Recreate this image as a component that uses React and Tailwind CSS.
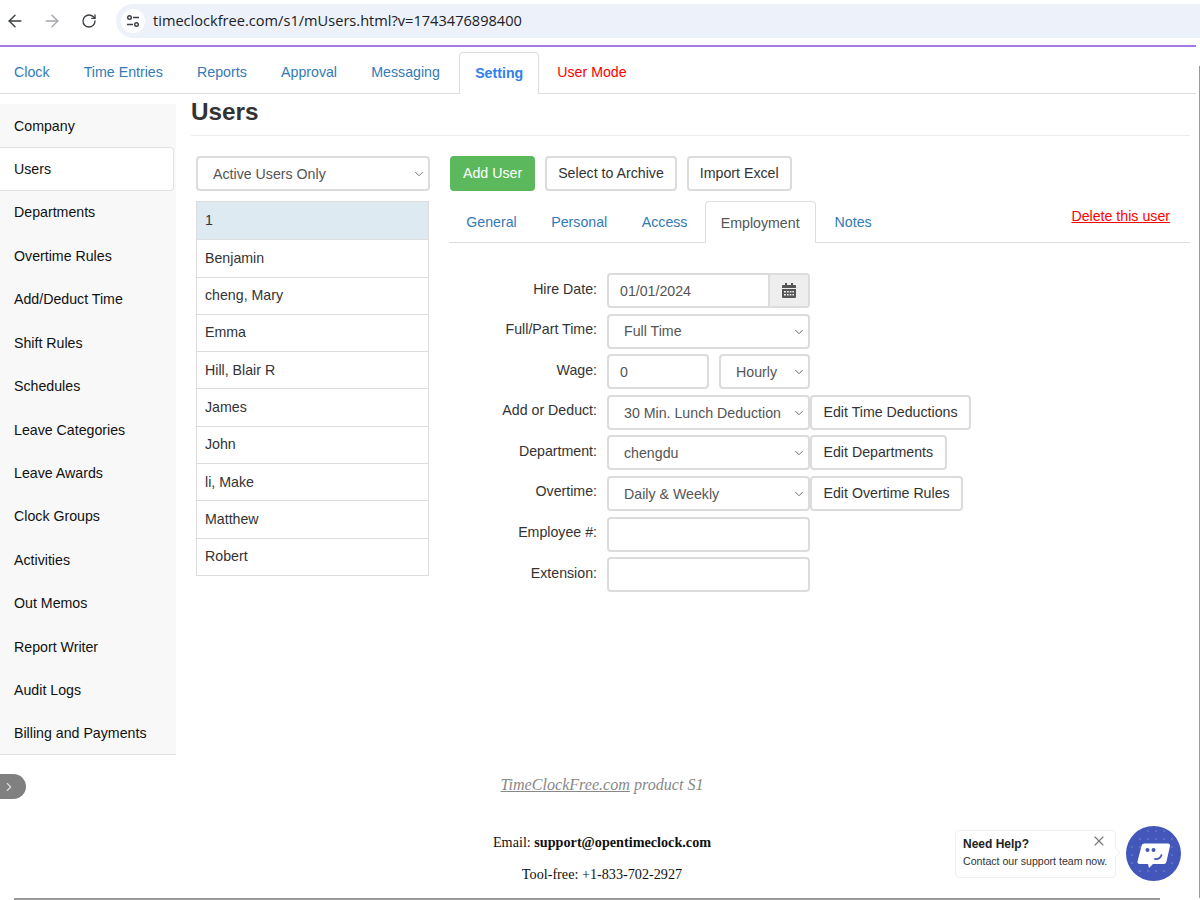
import React from "react";
import { ArrowLeft, ArrowRight, RotateCw, ChevronDown, ChevronRight, X } from "lucide-react";

const nav = ["Clock", "Time Entries", "Reports", "Approval", "Messaging"];
const side = ["Company", "Users", "Departments", "Overtime Rules", "Add/Deduct Time", "Shift Rules", "Schedules", "Leave Categories", "Leave Awards", "Clock Groups", "Activities", "Out Memos", "Report Writer", "Audit Logs", "Billing and Payments"];
const users = ["1", "Benjamin", "cheng, Mary", "Emma", "Hill, Blair R", "James", "John", "li, Make", "Matthew", "Robert"];

function Select({ value, className = "" }) {
  return (
    <div className={`relative h-[35px] rounded border-2 border-[#dcdcdc] bg-white flex items-center pl-[15px] pt-[2px] text-[14.2px] text-[#555] ${className}`}>
      <span className="whitespace-nowrap">{value}</span>
      <ChevronDown size={14} strokeWidth={1.4} className="absolute right-[2px] top-[9px] text-[#555]" />
    </div>
  );
}

function Btn({ children, className = "px-[11.5px]" }) {
  return <div className={`h-[35px] rounded border-2 border-[#dcdcdc] bg-white flex items-center text-[14.2px] text-[#333] whitespace-nowrap ${className}`}>{children}</div>;
}

function Row({ label, children }) {
  return (
    <div className="flex items-start h-[40.6px]">
      <div className="w-[148px] text-right text-[14.2px] text-[#333] pt-[5.5px] whitespace-nowrap">{label}</div>
      <div className="ml-[10px] flex items-start">{children}</div>
    </div>
  );
}

function Input({ value = "", className = "w-[203px]" }) {
  return <div className={`h-[35px] rounded border-2 border-[#dcdcdc] bg-white flex items-center pl-[11px] pt-[2px] text-[14.2px] text-[#555] ${className}`}>{value}</div>;
}

function CalendarIcon() {
  return (
    <svg width="14" height="15" viewBox="0 0 14 15" fill="#555">
      <rect x="3" y="0" width="2" height="3" />
      <rect x="9" y="0" width="2" height="3" />
      <path d="M1 2h12a1 1 0 0 1 1 1v2H0V3a1 1 0 0 1 1-1z" />
      <path fillRule="evenodd" d="M0 6h14v8a1 1 0 0 1-1 1H1a1 1 0 0 1-1-1zM2 8v1.5h2V8zm3 0v1.5h1.7V8zm2.7 0v1.5h1.7V8zm2.7 0v1.5H12V8zM2 11v1.5h2V11zm3 0v1.5h1.7V11zm2.7 0v1.5h1.7V11zm2.7 0v1.5H12V11z" />
    </svg>
  );
}

function ChatButton() {
  const dots = [];
  for (let y = 5; y < 55; y += 8) {
    for (let x = 6; x < 55; x += 8) {
      if ((x - 27.5) ** 2 + (y - 27.5) ** 2 < 625) dots.push(<circle key={`${x}-${y}`} cx={x} cy={y} r="0.8" fill="#7f8fd6" />);
    }
  }
  return (
    <svg width="55" height="55" viewBox="0 0 55 55">
      <circle cx="27.5" cy="27.5" r="27.5" fill="#4357bb" />
      {dots}
      <path d="M18 17.500h24a2 2 0 0 1 2 2.500l-3.500 15.500a3 3 0 0 1-3 2.500H27l-4 4-1-4h-8.500a2 2 0 0 1-2-2.500L15.500 20a3 3 0 0 1 2.500-2.500z" fill="#fff" />
      <circle cx="21.500" cy="24" r="2" fill="#4357bb" />
      <circle cx="27.500" cy="24" r="2" fill="#4357bb" />
      <path d="M29 33c3 .3 5.500-1 6.500-4" fill="none" stroke="#4357bb" strokeWidth="1.800" strokeLinecap="round" />
    </svg>
  );
}

export default function App() {
  return (
    <div className="relative h-[900px] w-[1200px] overflow-hidden bg-white [font-family:Liberation_Sans,sans-serif]">
      {/* Browser toolbar */}
      <div className="h-[45px] flex items-center pl-[5px] pb-[3px] [font-family:Open_Sans,sans-serif]">
        <ArrowLeft size={20} strokeWidth={1.7} className="text-[#3c4043]" />
        <ArrowRight size={20} strokeWidth={1.7} className="ml-[17px] text-[#a5a8ac]" />
        <RotateCw size={16} strokeWidth={2} className="ml-[19px] text-[#3c4043]" />
        <div className="ml-[19px] flex h-[34px] flex-1 items-center rounded-l-full bg-[#edf2fa] pl-[5px]">
          <div className="flex h-[24px] w-[24px] items-center justify-center rounded-full bg-white">
            <svg width="14" height="14" viewBox="0 0 14 14" fill="none" stroke="#3c4043" strokeWidth="1.4">
              <circle cx="3.500" cy="3.500" r="1.800" />
              <path d="M7 3.500h6M1 10.500h6" />
              <circle cx="10.500" cy="10.500" r="1.800" />
            </svg>
          </div>
          <span className="ml-[8px] text-[14.6px] text-[#202124]">timeclockfree.com/s1/mUsers.html?v=1743476898400</span>
        </div>
      </div>
      <div className="h-[2px] w-[1196px] bg-[#a47ae2]" />

      {/* Top nav */}
      <div className="flex h-[47px] w-[1196px] items-end border-b border-[#dedede]">
        {nav.map((n) => (
          <div key={n} className="flex h-[41px] items-center pl-[14px] pr-[20.25px] pt-px text-[14.2px] text-[#337ab7] whitespace-nowrap">{n}</div>
        ))}
        <div className="-mb-px -ml-[1px] flex h-[42px] items-center rounded-t border border-b-0 border-[#dedede] bg-white px-[15px] pt-px text-[14.2px] font-bold text-[#2f80ed]">Setting</div>
        <div className="flex h-[41px] items-center pl-[18px] pt-px text-[14.2px] text-[#f00] whitespace-nowrap">User Mode</div>
      </div>

      <div className="flex">
        {/* Sidebar */}
        <div className="mt-[10px] h-[651px] w-[176px] shrink-0 self-start overflow-hidden border-b border-[#e2e2e2] bg-[#f8f8f8]">
          {side.map((s) =>
            s === "Users" ? (
              <div key={s} className="flex h-[43.43px] w-[174px] items-center rounded-r border border-l-0 border-[#e2e2e2] bg-white pl-[14px] pt-px text-[14.2px] text-[#111]">{s}</div>
            ) : (
              <div key={s} className="flex h-[43.43px] items-center pl-[14px] pt-px text-[14.2px] text-[#111]">{s}</div>
            )
          )}
        </div>

        {/* Main */}
        <div className="ml-[15px] w-[999px]">
          <div className="flex h-[42px] items-center border-b border-[#eeeeee] pb-[4px] text-[24.3px] font-bold text-[#333]">Users</div>
          <div className="mt-[20px] flex pl-[5px]">
            <div className="w-[234px] shrink-0">
              <Select value="Active Users Only" className="w-[234px]" />
              <div className="mt-[10px] w-[233px] border border-[#ddd]">
                {users.map((u, i) => (
                  <div key={u} className={`flex h-[37.3px] items-center pl-[8px] text-[14.2px] text-[#333] ${i ? "border-t border-[#ddd]" : "bg-[#deeaf2]"}`}>{u}</div>
                ))}
              </div>
            </div>

            <div className="ml-[19px] flex-1">
              <div className="flex gap-[10px] pl-px">
                <div className="flex h-[35px] items-center rounded bg-[#5cb85c] px-[13px] text-[14.2px] text-white">Add User</div>
                <Btn className="px-[11px]">Select to Archive</Btn>
                <Btn className="px-[11px]">Import Excel</Btn>
              </div>
              <div className="mt-[10px] flex h-[42px] items-end justify-between border-b border-[#dedede] pr-[20px]">
                <div className="flex items-end">
                  {["General", "Personal", "Access"].map((t) => (
                    <div key={t} className="flex h-[41px] items-center px-[17.25px] pt-[2px] text-[14.2px] text-[#337ab7]">{t}</div>
                  ))}
                  <div className="-mb-px flex h-[42px] items-center rounded-t border border-b-0 border-[#dedede] bg-white px-[15px] pt-[2px] text-[14.2px] text-[#555]">Employment</div>
                  <div className="flex h-[41px] items-center pl-[19px] pt-[2px] text-[14.2px] text-[#337ab7]">Notes</div>
                </div>
                <div className="mb-[15px] text-[14.2px] text-[#f00] underline">Delete this user</div>
              </div>

              <div className="mt-[30px]">
                <Row label="Hire Date:">
                  <div className="flex h-[35px] w-[203px] overflow-hidden rounded border-2 border-[#dcdcdc]">
                    <div className="flex flex-1 items-center pl-[11px] pt-[2px] text-[14.2px] text-[#555]">01/01/2024</div>
                    <div className="flex w-[40px] items-center justify-center border-l-2 border-[#dcdcdc] bg-[#eeeeee]"><CalendarIcon /></div>
                  </div>
                </Row>
                <Row label="Full/Part Time:"><Select value="Full Time" className="w-[203px]" /></Row>
                <Row label="Wage:">
                  <Input value="0" className="w-[102px]" />
                  <Select value="Hourly" className="ml-[10px] w-[91px]" />
                </Row>
                <Row label="Add or Deduct:">
                  <Select value="30 Min. Lunch Deduction" className="w-[203px]" />
                  <Btn>Edit Time Deductions</Btn>
                </Row>
                <Row label="Department:">
                  <Select value="chengdu" className="w-[203px]" />
                  <Btn>Edit Departments</Btn>
                </Row>
                <Row label="Overtime:">
                  <Select value="Daily & Weekly" className="w-[203px]" />
                  <Btn>Edit Overtime Rules</Btn>
                </Row>
                <Row label="Employee #:"><Input /></Row>
                <Row label="Extension:"><Input /></Row>
              </div>
            </div>
          </div>
        </div>
      </div>

      {/* Footer */}
      <div className="absolute left-[176px] top-[774px] w-[852px] text-center [font-family:Liberation_Serif,serif] text-[#111]">
        <div className="h-[22px] text-[16.1px] italic leading-[22px] text-[#888]"><span className="underline">TimeClockFree.com</span> product S1</div>
        <div className="mt-[35px] h-[22px] text-[14.2px] leading-[22px]">Email: <b>support@opentimeclock.com</b></div>
        <div className="mt-[10px] h-[22px] text-[14.2px] leading-[22px]">Tool-free: +1-833-702-2927</div>
      </div>

      {/* Sidebar toggle */}
      <div className="absolute left-0 top-[774px] flex h-[25px] w-[26px] items-center rounded-r-full bg-[#808080] pl-[2px]">
        <ChevronRight size={14} strokeWidth={2} className="text-[#ddd]" />
      </div>

      {/* Help bubble */}
      <div className="absolute left-[955px] top-[830px] h-[48px] w-[161px] rounded border border-[#f0f0f0] bg-white pl-[7px] pt-[6px]">
        <div className="absolute -right-[4px] top-[18px] h-[7px] w-[7px] rotate-45 border-r border-t border-[#f0f0f0] bg-white" />
        <div className="text-[12px] font-bold leading-[15px] text-[#222]">Need Help?</div>
        <div className="mt-[2px] text-[10.6px] leading-[14px] whitespace-nowrap text-[#333]">Contact our support team now.</div>
        <X size={16} strokeWidth={1.7} className="absolute right-[8px] top-[2px] text-[#777]" />
      </div>
      <div className="absolute left-[1126px] top-[826px] h-[55px] w-[55px]">
        <ChatButton />
      </div>

      {/* Window edges */}
      <div className="absolute left-[14px] top-[898px] h-[2px] w-[1146px] bg-[#9a9a9a]" />
      <div className="absolute left-[1199px] top-[66px] h-[832px] w-px bg-[#9a9a9a]" />
    </div>
  );
}
